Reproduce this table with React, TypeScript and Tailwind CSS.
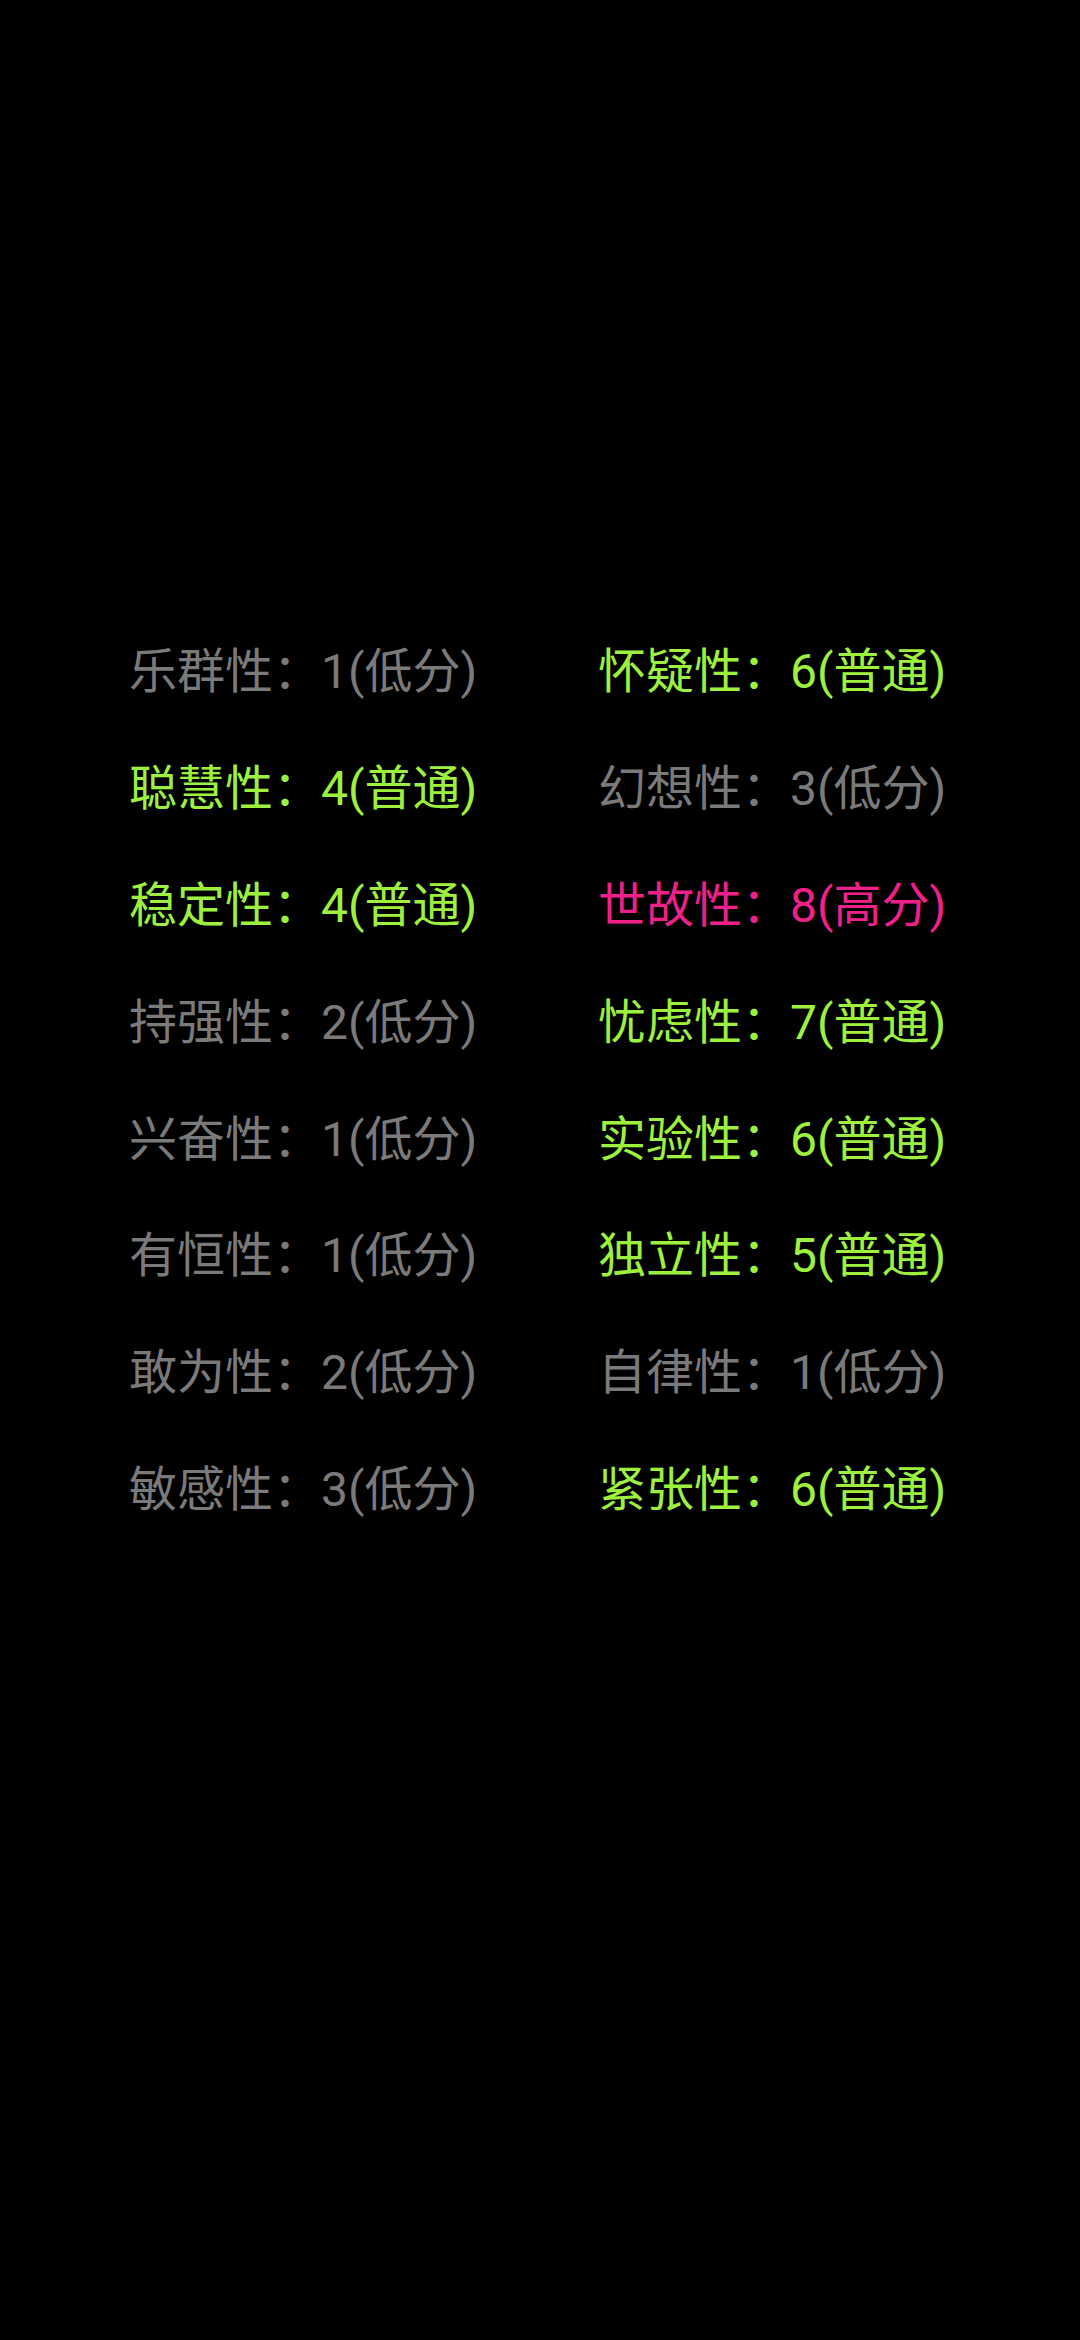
const GRAY = "text-[#7a7a7a]"
const GREEN = "text-[#9ef03e]"
const PINK = "text-[#f0208a]"

type Trait = { name: string; score: number; level: string; color: string }

const left: Trait[] = [
    { name: "乐群性", score: 1, level: "低分", color: GRAY },
    { name: "聪慧性", score: 4, level: "普通", color: GREEN },
    { name: "稳定性", score: 4, level: "普通", color: GREEN },
    { name: "持强性", score: 2, level: "低分", color: GRAY },
    { name: "兴奋性", score: 1, level: "低分", color: GRAY },
    { name: "有恒性", score: 1, level: "低分", color: GRAY },
    { name: "敢为性", score: 2, level: "低分", color: GRAY },
    { name: "敏感性", score: 3, level: "低分", color: GRAY },
]

const right: Trait[] = [
    { name: "怀疑性", score: 6, level: "普通", color: GREEN },
    { name: "幻想性", score: 3, level: "低分", color: GRAY },
    { name: "世故性", score: 8, level: "高分", color: PINK },
    { name: "忧虑性", score: 7, level: "普通", color: GREEN },
    { name: "实验性", score: 6, level: "普通", color: GREEN },
    { name: "独立性", score: 5, level: "普通", color: GREEN },
    { name: "自律性", score: 1, level: "低分", color: GRAY },
    { name: "紧张性", score: 6, level: "普通", color: GREEN },
]

const TraitColumn = ({ items }: { items: Trait[] }) => {
    return (
        <div className="flex flex-col">
            {items.map((t) => (
                <div key={t.name} className={`h-[116.8px] flex items-center whitespace-nowrap ${t.color}`}>
                    {t.name}：{t.score}({t.level})
                </div>
            ))}
        </div>
    )
}

export default function App() {
    return (
        <div
            className="w-[1080px] h-[2340px] bg-black pt-[614px] pl-[129px] text-[48px]"
            style={{ fontFamily: 'Roboto, "Noto Sans CJK SC", sans-serif' }}
        >
            <div className="grid grid-cols-[469px_auto]">
                <TraitColumn items={left} />
                <TraitColumn items={right} />
            </div>
        </div>
    )
}
